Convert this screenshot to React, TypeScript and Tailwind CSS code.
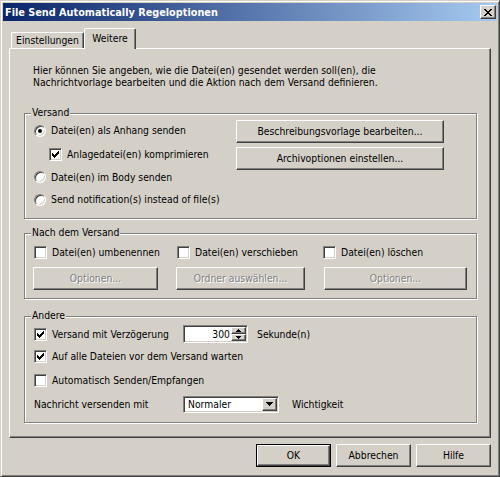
import React from "react";

const FONT = "font-['DejaVu_Sans_Condensed','Liberation_Sans',sans-serif]";

const raised =
  "border border-t-white border-l-white border-r-[#404040] border-b-[#404040] shadow-[inset_-1px_-1px_0_#808080]";
const sunken =
  "border border-t-[#808080] border-l-[#808080] border-r-white border-b-white shadow-[inset_1px_1px_0_#404040,inset_-1px_-1px_0_#d4d0c8]";

// classic 7x7 check mark, one column of 3 pixels each
const CHECK = "M2 4h1v3H2zM3 5h1v3H3zM4 6h1v3H4zM5 5h1v3H5zM6 4h1v3H6zM7 3h1v3H7zM8 2h1v3H8z";

// close glyph: two 2px wide diagonals
const CLOSE = Array.from({ length: 7 })
  .map((_, i) => `M${i} ${i}h2v1h-2zM${6 - i} ${i}h2v1h-2z`)
  .join("");

function Checkbox({ checked, label, className = "" }: { checked?: boolean; label: string; className?: string }) {
  return (
    <div className={`flex items-center gap-[5px] ${className}`}>
      <div className={`w-[13px] h-[13px] shrink-0 bg-white ${sunken}`}>
        {checked && (
          <svg width="11" height="11" viewBox="0 0 11 11" shapeRendering="crispEdges">
            <path d={CHECK} fill="#000" />
          </svg>
        )}
      </div>
      <span className="whitespace-nowrap">{label}</span>
    </div>
  );
}

function Radio({ checked, label, className = "" }: { checked?: boolean; label: string; className?: string }) {
  return (
    <div className={`flex items-center gap-[5px] ${className}`}>
      <div className="w-[12px] h-[12px] shrink-0 rounded-full bg-white border border-t-[#808080] border-l-[#808080] border-r-white border-b-white shadow-[inset_1px_1px_0_#404040,inset_-1px_-1px_0_#d4d0c8] flex items-center justify-center">
        {checked && <div className="w-[4px] h-[4px] rounded-full bg-black" />}
      </div>
      <span className="whitespace-nowrap">{label}</span>
    </div>
  );
}

function Button({
  children,
  disabled,
  isDefault,
  className = "",
}: {
  children: React.ReactNode;
  disabled?: boolean;
  isDefault?: boolean;
  className?: string;
}) {
  const face = (
    <div className={`h-full w-full flex items-center justify-center bg-[#d4d0c8] ${raised}`}>
      <span
        className={
          disabled ? "text-[#808080] [text-shadow:1px_1px_0_#fff] whitespace-nowrap" : "text-black whitespace-nowrap"
        }
      >
        {children}
      </span>
    </div>
  );
  if (isDefault) {
    return <div className={`border border-black ${className}`}>{face}</div>;
  }
  return <div className={className}>{face}</div>;
}

function Group({ label, className = "", children }: { label: string; className?: string; children: React.ReactNode }) {
  return (
    <div className={`relative border border-[#808080] shadow-[inset_1px_1px_0_#fff,1px_1px_0_#fff] ${className}`}>
      <span className="absolute left-[6px] -top-[8px] bg-[#d4d0c8] px-[1px] leading-[13px] whitespace-nowrap">
        {label}
      </span>
      {children}
    </div>
  );
}

function SpinBox() {
  return (
    <div className={`w-[65px] h-[18px] bg-white p-[1px] flex ${sunken}`}>
      <div className="flex-1 text-right pr-[1px] leading-[14px]">300</div>
      <div className="w-[15px] flex flex-col">
        <div className={`h-[7px] flex items-center justify-center bg-[#d4d0c8] ${raised}`}>
          <svg width="5" height="3" viewBox="0 0 5 3" shapeRendering="crispEdges">
            <path d="M2 0h1v1H2zM1 1h3v1H1zM0 2h5v1H0z" fill="#000" />
          </svg>
        </div>
        <div className={`h-[7px] flex items-center justify-center bg-[#d4d0c8] ${raised}`}>
          <svg width="5" height="3" viewBox="0 0 5 3" shapeRendering="crispEdges">
            <path d="M0 0h5v1H0zM1 1h3v1H1zM2 2h1v1H2z" fill="#000" />
          </svg>
        </div>
      </div>
    </div>
  );
}

function Combo() {
  return (
    <div className={`w-[96px] h-[17px] bg-white p-[1px] flex ${sunken}`}>
      <div className="flex-1 pl-[3px] leading-[13px]">Normaler</div>
      <div className={`w-[15px] flex items-center justify-center bg-[#d4d0c8] ${raised}`}>
        <svg width="7" height="4" viewBox="0 0 7 4" shapeRendering="crispEdges">
          <path d="M0 0h7v1H0zM1 1h5v1H1zM2 2h3v1H2zM3 3h1v1H3z" fill="#000" />
        </svg>
      </div>
    </div>
  );
}

export default function App() {
  return (
    <div
      className={`${FONT} text-[10.3px] leading-[13px] text-black w-[500px] h-[477px] bg-[#d4d0c8] border border-t-[#d4d0c8] border-l-[#d4d0c8] border-r-[#404040] border-b-[#404040] shadow-[inset_1px_1px_0_#fff,inset_-1px_-1px_0_#808080] p-[2px] flex flex-col`}
    >
      {/* Title bar */}
      <div className="h-[18px] shrink-0 flex items-center justify-between pl-[2px] pr-[1px] bg-linear-to-r/srgb from-[#0a246a] to-[#a6caf0]">
        <span className="text-white font-bold text-[10.8px] whitespace-nowrap">File Send Automatically Regeloptionen</span>
        <div className={`w-[16px] h-[14px] flex items-center justify-center bg-[#d4d0c8] ${raised}`}>
          <svg width="8" height="7" viewBox="0 0 8 7" shapeRendering="crispEdges">
            <path d={CLOSE} fill="#000" />
          </svg>
        </div>
      </div>

      {/* Client area */}
      <div className="ml-[6px] mt-[7px] flex flex-col w-[482px]">
        {/* Tabs */}
        <div className="flex items-end h-[20px] pl-[2px]">
          <div className="w-[73px] h-[16px] flex items-center justify-center border-l border-t border-l-white border-t-white border-r border-r-[#404040] shadow-[inset_-1px_0_0_#808080] rounded-tl-[2px] rounded-tr-[2px]">
            Einstellungen
          </div>
          <div className="relative z-10 -mb-px w-[52px] h-[21px] flex items-start pt-[3px] justify-center bg-[#d4d0c8] border-l border-t border-l-white border-t-white border-r border-r-[#404040] shadow-[inset_-1px_0_0_#808080] rounded-tl-[2px] rounded-tr-[2px]">
            Weitere
          </div>
        </div>

        {/* Tab panel */}
        <div className="h-[390px] border border-t-white border-l-white border-r-[#404040] border-b-[#404040] shadow-[inset_-1px_-1px_0_#808080] flex flex-col">
          <p className="ml-[23px] mt-[15px] leading-[12px]">
            Hier können Sie angeben, wie die Datei(en) gesendet werden soll(en), die
            <br />
            Nachrichtvorlage bearbeiten und die Aktion nach dem Versand definieren.
          </p>

          {/* Versand */}
          <Group label="Versand" className="w-[453px] h-[106px] ml-[14px] mt-[25px]">
            <div className="flex pt-[5px] pl-[9px]">
              <div className="w-[202px] flex flex-col">
                <Radio checked label="Datei(en) als Anhang senden" className="h-[23px]" />
                <Checkbox checked label="Anlagedatei(en) komprimieren" className="h-[24px] pl-[15px] gap-[4px]" />
                <Radio label="Datei(en) im Body senden" className="h-[22px]" />
                <Radio label="Send notification(s) instead of file(s)" className="h-[23px]" />
              </div>
              <div className="flex flex-col gap-[4px] mt-[1px]">
                <Button className="w-[208px] h-[23px]">Beschreibungsvorlage bearbeiten...</Button>
                <Button className="w-[208px] h-[23px]">Archivoptionen einstellen...</Button>
              </div>
            </div>
          </Group>

          {/* Nach dem Versand */}
          <Group label="Nach dem Versand" className="w-[453px] h-[66px] ml-[14px] mt-[14px]">
            <div className="flex pt-[10px] pl-[8px]">
              <div className="w-[143px] flex flex-col">
                <Checkbox label="Datei(en) umbenennen" className="h-[17px] ml-[1px]" />
                <Button disabled className="w-[125px] h-[23px] mt-[6px]">
                  Optionen...
                </Button>
              </div>
              <div className="w-[147px] flex flex-col">
                <Checkbox label="Datei(en) verschieben" className="h-[17px] ml-[1px]" />
                <Button disabled className="w-[129px] h-[23px] mt-[6px]">
                  Ordner auswählen...
                </Button>
              </div>
              <div className="flex flex-col">
                <Checkbox label="Datei(en) löschen" className="h-[17px]" />
                <Button disabled className="w-[143px] h-[23px] mt-[6px] ml-[1px]">
                  Optionen...
                </Button>
              </div>
            </div>
          </Group>

          {/* Andere */}
          <Group label="Andere" className="w-[453px] h-[107px] ml-[14px] mt-[17px]">
            <div className="flex flex-col pt-[7px] pl-[9px]">
              <div className="flex items-center h-[20px]">
                <Checkbox checked label="Versand mit Verzögerung" className="w-[149px]" />
                <SpinBox />
                <span className="ml-[9px]">Sekunde(n)</span>
              </div>
              <Checkbox checked label="Auf alle Dateien vor dem Versand warten" className="h-[24px]" />
              <Checkbox label="Automatisch Senden/Empfangen" className="h-[24px]" />
              <div className="flex items-center h-[24px]">
                <span className="w-[149px]">Nachricht versenden mit</span>
                <Combo />
                <span className="ml-[13px]">Wichtigkeit</span>
              </div>
            </div>
          </Group>
        </div>

        {/* Dialog buttons */}
        <div className="flex justify-end gap-[5px] mt-[6px]">
          <Button isDefault className="w-[75px] h-[23px]">
            OK
          </Button>
          <Button className="w-[75px] h-[23px]">Abbrechen</Button>
          <Button className="w-[75px] h-[23px]">Hilfe</Button>
        </div>
      </div>
    </div>
  );
}
